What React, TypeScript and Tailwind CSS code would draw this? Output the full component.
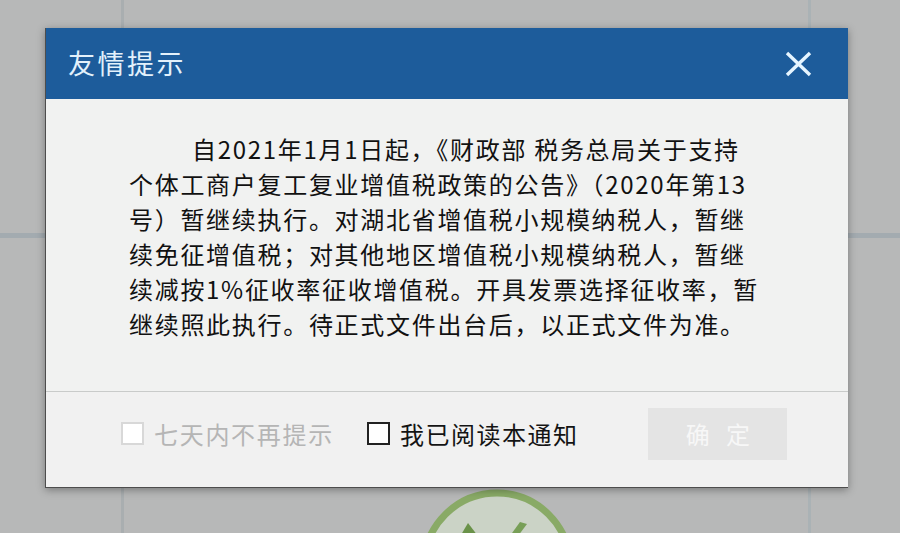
const font = { fontFamily: '"Noto Sans CJK SC", "Noto Sans", sans-serif' };

const lines = [
  '自2021年1月1日起，《财政部 税务总局关于支持',
  '个体工商户复工复业增值税政策的公告》（2020年第13',
  '号）暂继续执行。对湖北省增值税小规模纳税人，暂继',
  '续免征增值税；对其他地区增值税小规模纳税人，暂继',
  '续减按1%征收率征收增值税。开具发票选择征收率，暂',
  '继续照此执行。待正式文件出台后，以正式文件为准。',
];

function Backdrop() {
  return (
    <div className="absolute inset-0 overflow-hidden">
      <div className="absolute left-[121px] top-0 h-full w-[3px] bg-[#a9aeb0]" />
      <div className="absolute left-[808px] top-0 h-full w-[3px] bg-[#aab2b5]" />
      <div className="absolute left-0 top-[233px] h-[5px] w-full bg-[#a3abb0]" />
      <svg className="absolute left-[400px] top-[480px]" width="200" height="60" viewBox="400 480 200 60">
        <circle cx="497" cy="566" r="73" fill="#cbd3c6" stroke="#89aa66" strokeWidth="7" />
        <polygon points="458,540 468,523 481,540" fill="#6a9249" />
        <polygon points="507,540 520,522 527,524 515,540" fill="#789f57" />
      </svg>
    </div>
  );
}

function Checkbox({ disabled }: { disabled?: boolean }) {
  return (
    <span
      className={
        disabled
          ? 'h-[23px] w-[23px] shrink-0 border-2 border-[#d8d8d8] bg-white'
          : 'h-[23px] w-[23px] shrink-0 border-2 border-[#222] bg-white'
      }
    />
  );
}

export default function App() {
  return (
    <div className="relative h-[533px] w-[900px] overflow-hidden bg-[#b7b8b8]" style={font}>
      <Backdrop />
      <div className="relative pl-[45px] pt-[28px]">
        <div className="flex h-[460px] w-[803px] flex-col border-l border-b border-[#4d4d4d] shadow-[0_2px_8px_rgba(0,0,0,0.35)]">
          {/* title bar */}
          <div className="flex h-[71px] items-center justify-between bg-[#1d5c9b] pl-[22px] pr-[36px]">
            <span className="text-[27px] tracking-[2.5px] text-[#e3f1fb]">友情提示</span>
            <svg width="27" height="26" viewBox="0 0 27 26">
              <path d="M2 2 L25 24 M25 2 L2 24" stroke="#e6f5ff" strokeWidth="3.4" />
            </svg>
          </div>

          {/* body */}
          <div className="flex-1 bg-[#f1f2f1] pl-[83px] pt-[32px]">
            <div className="text-[24px] leading-[35px] tracking-[1.7px] text-[#111]">
              {lines.map((l, i) => (
                <div key={i} className={i === 0 ? 'whitespace-pre pl-[63px]' : 'whitespace-pre'}>
                  {l}
                </div>
              ))}
            </div>
          </div>

          {/* footer */}
          <div className="flex h-[96px] items-center border-t border-[#c9cbca] bg-[#f1f1f1] pb-[12px] pl-[75px]">
            <Checkbox disabled />
            <span className="ml-[10px] text-[24px] tracking-[1.7px] text-[#b5b5b5]">七天内不再提示</span>
            <span className="ml-[33px]" />
            <Checkbox />
            <span className="ml-[10px] text-[24px] tracking-[1.5px] text-[#141414]">我已阅读本通知</span>
            <button className="ml-[70px] flex h-[52px] w-[139px] items-center justify-center bg-[#e4e4e4] text-[24px] text-[#f7f7f7]">
              确&nbsp;&nbsp;&nbsp;定
            </button>
          </div>
        </div>
      </div>
    </div>
  );
}
